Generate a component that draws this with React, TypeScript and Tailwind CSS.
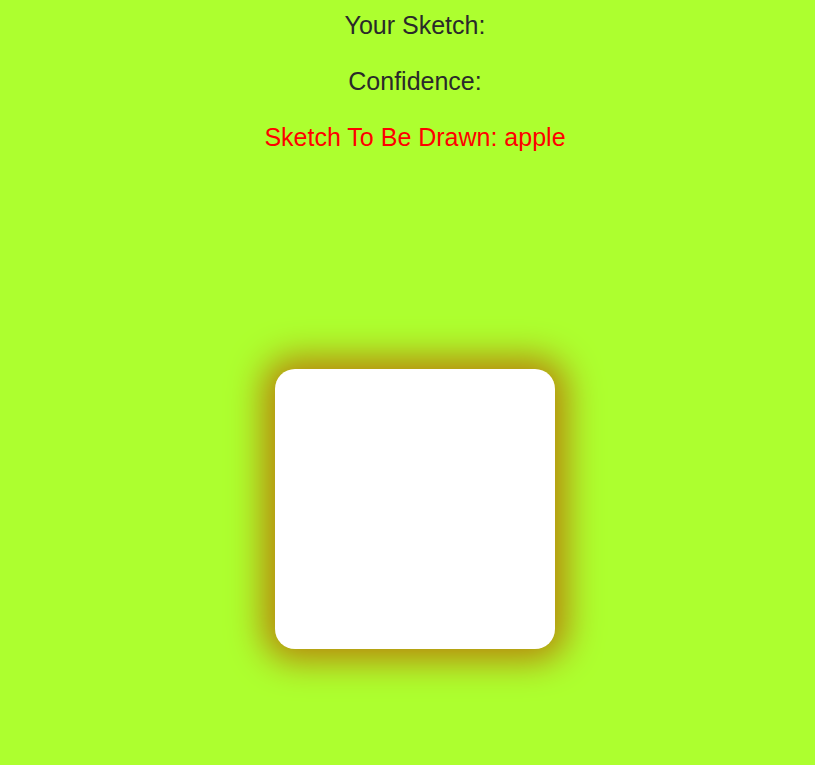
export default function App() {
  return (
    <div className="min-h-[765px] w-full bg-[#adff2f] flex flex-col items-center pt-[9px] pl-[15px] font-['Liberation_Sans',Arial,sans-serif]">
      <p className="text-[25px] leading-8 text-[#2a2a2a]">Your Sketch:</p>
      <p className="text-[25px] leading-8 text-[#2a2a2a] mt-6">Confidence:</p>
      <p className="text-[25px] leading-8 text-[#ff0000] mt-6">Sketch To Be Drawn: apple</p>
      <div className="mt-[216px] w-[280px] h-[280px] bg-white rounded-[20px] shadow-[0_0_34px_12px_#b8860b]" />
    </div>
  );
}
